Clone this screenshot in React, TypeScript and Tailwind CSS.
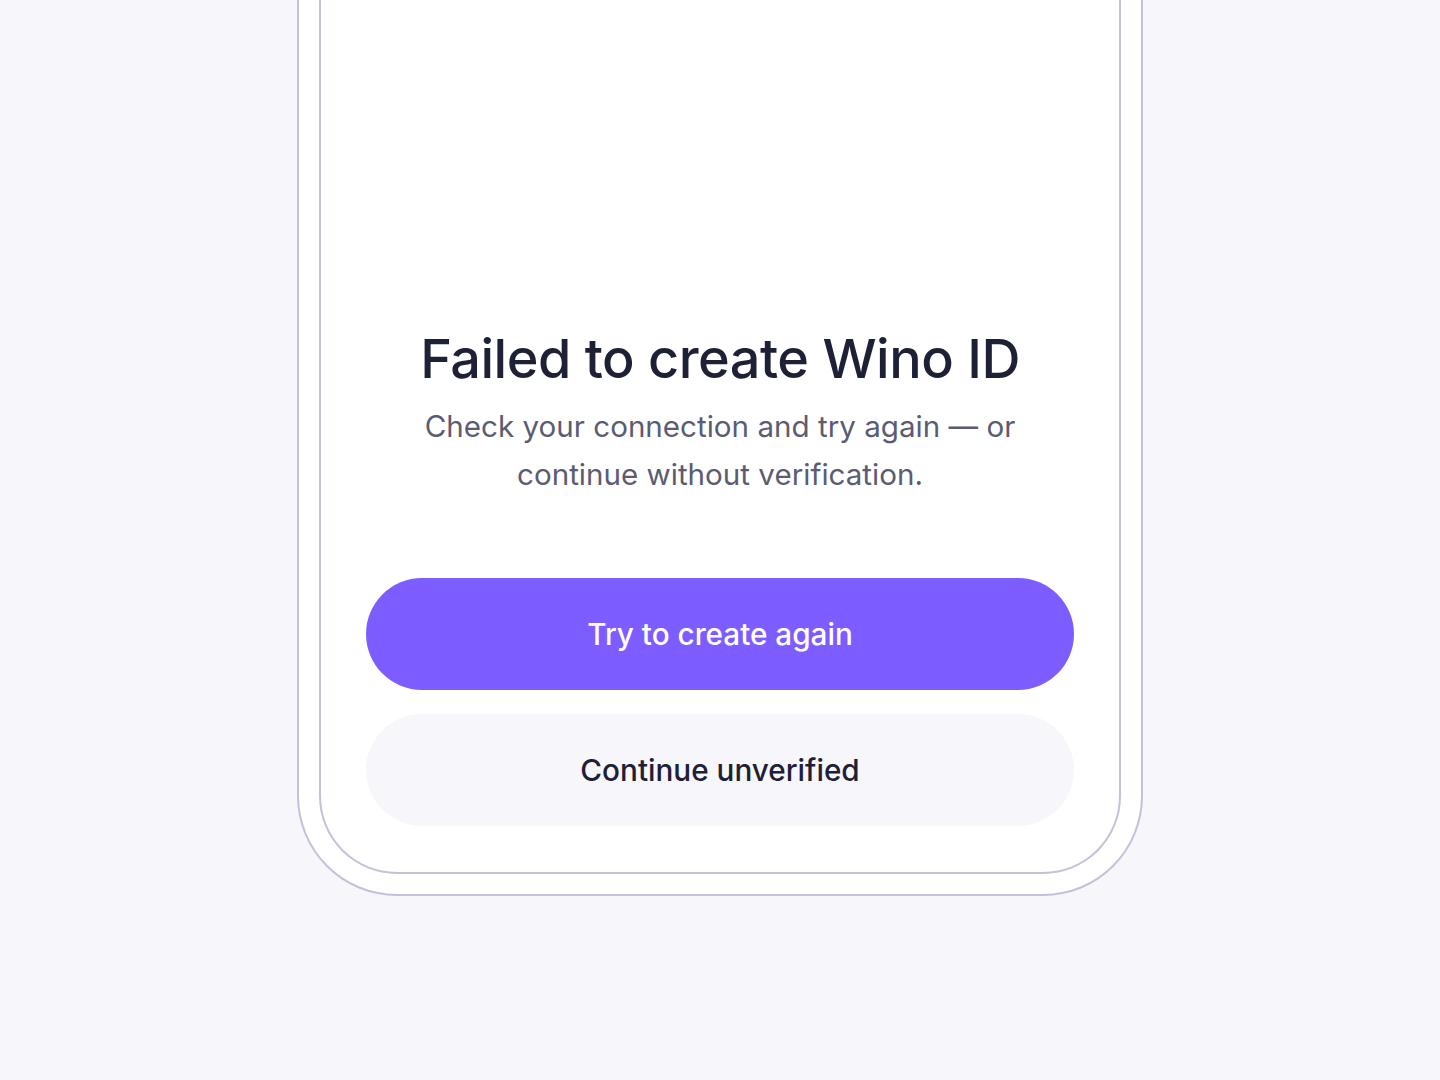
export default function App() {
  return (
    <div
      className="min-h-[1080px] w-full bg-[#f6f6fb] flex justify-center"
      style={{ fontFamily: "Inter, 'Noto Sans', sans-serif" }}
    >
      {/* Phone frame */}
      <div className="w-[846px] h-[896px] bg-white border-x-2 border-b-2 border-[#c3c2d8] rounded-b-[100px] px-[20px] pb-[20px]">
        <div className="h-full border-x-2 border-b-2 border-[#c3c2d8] rounded-b-[78px] px-[45px] pb-[46px] flex flex-col justify-end">
          <div className="text-center mb-[80px]">
            <h1 className="text-[54px] leading-[64px] font-medium tracking-[-0.5px] text-[#1e2035]">
              Failed to create Wino ID
            </h1>
            <p className="mt-[11px] mx-auto max-w-[620px] text-[29.6px] leading-[48px] text-[#5b5c73]">
              Check your connection and try again — or continue without verification.
            </p>
          </div>

          <div className="flex flex-col gap-[24px]">
            <button className="h-[112px] w-full rounded-full bg-[#7d5dff] text-white text-[29.7px] font-medium">
              Try to create again
            </button>
            <button className="h-[112px] w-full rounded-full bg-[#f6f6fb] text-[#1e2035] text-[29.7px] font-medium">
              Continue unverified
            </button>
          </div>
        </div>
      </div>
    </div>
  );
}
